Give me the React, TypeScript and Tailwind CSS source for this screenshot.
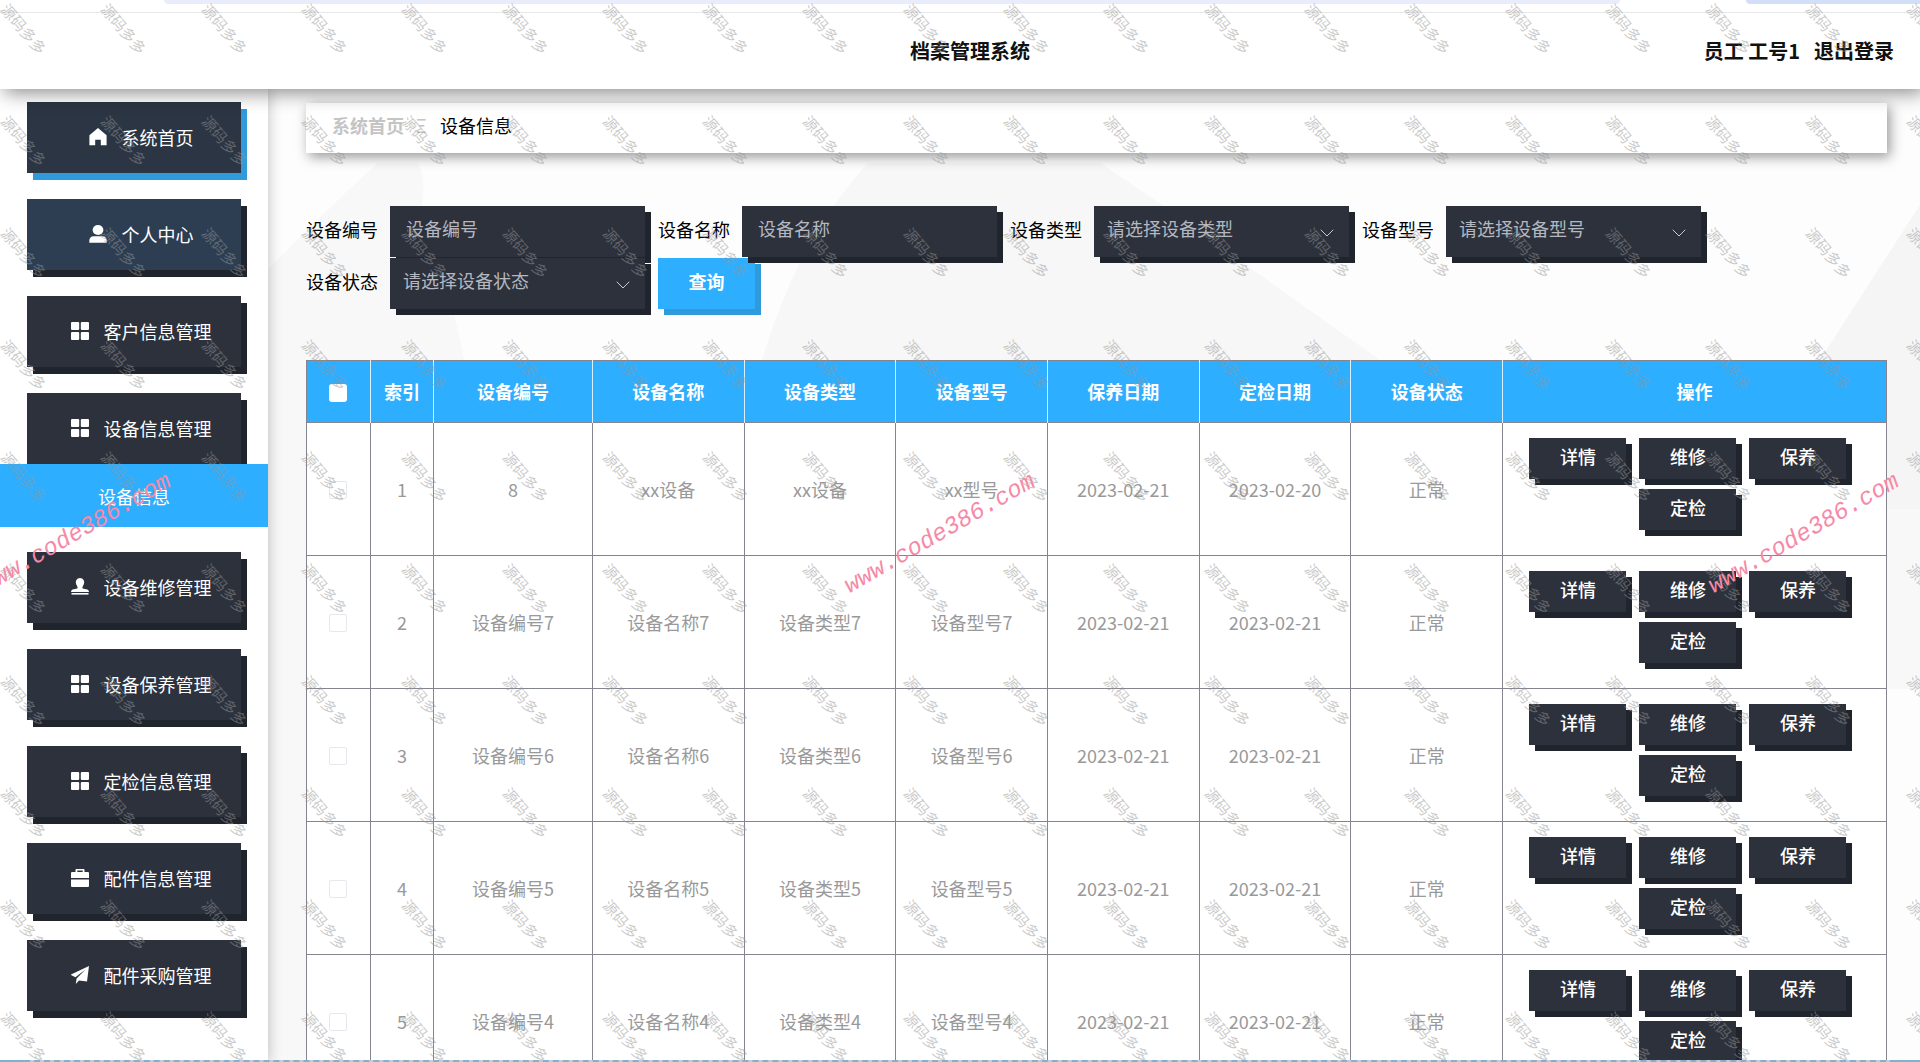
import { ChevronDown } from "lucide-react";

type IconName = "home" | "user" | "grid" | "stamp" | "case" | "plane";

const menu: { label: string; icon: IconName; tone: string; children?: string[] }[] = [
  { label: "系统首页", icon: "home", tone: "bg-[#2b3543] shadow-[6px_7px_0_#2f9bdb]" },
  { label: "个人中心", icon: "user", tone: "bg-[#2d3e53] shadow-[6px_7px_0_#20242c]" },
  { label: "客户信息管理", icon: "grid", tone: "bg-[#2c313c] shadow-[6px_7px_0_#20242c]" },
  { label: "设备信息管理", icon: "grid", tone: "bg-[#2c313c] shadow-[6px_7px_0_#20242c]", children: ["设备信息"] },
  { label: "设备维修管理", icon: "stamp", tone: "bg-[#2c313c] shadow-[6px_7px_0_#20242c]" },
  { label: "设备保养管理", icon: "grid", tone: "bg-[#2c333f] shadow-[6px_7px_0_#20242c]" },
  { label: "定检信息管理", icon: "grid", tone: "bg-[#2c313c] shadow-[6px_7px_0_#20242c]" },
  { label: "配件信息管理", icon: "case", tone: "bg-[#2c313e] shadow-[6px_7px_0_#20242c]" },
  { label: "配件采购管理", icon: "plane", tone: "bg-[#2c313c] shadow-[6px_7px_0_#20242c]" },
];

const columns = [
  { title: "设备编号", width: "w-[10.05%]" },
  { title: "设备名称", width: "w-[9.6%]" },
  { title: "设备类型", width: "w-[9.6%]" },
  { title: "设备型号", width: "w-[9.6%]" },
  { title: "保养日期", width: "w-[9.6%]" },
  { title: "定检日期", width: "w-[9.6%]" },
  { title: "设备状态", width: "w-[9.6%]" },
];

const rows = [
  ["8", "xx设备", "xx设备", "xx型号", "2023-02-21", "2023-02-20", "正常"],
  ["设备编号7", "设备名称7", "设备类型7", "设备型号7", "2023-02-21", "2023-02-21", "正常"],
  ["设备编号6", "设备名称6", "设备类型6", "设备型号6", "2023-02-21", "2023-02-21", "正常"],
  ["设备编号5", "设备名称5", "设备类型5", "设备型号5", "2023-02-21", "2023-02-21", "正常"],
  ["设备编号4", "设备名称4", "设备类型4", "设备型号4", "2023-02-21", "2023-02-21", "正常"],
];

const actions = ["详情", "维修", "保养", "定检"];

const fieldClass =
  "relative h-[51px] w-[255px] rounded-none bg-[#2c313c] pb-2 text-lg text-[#b4b8c0] shadow-[6px_6px_0_#20242c] outline-none placeholder:text-[#b4b8c0]";

const labelClass = "w-[72px] leading-[47px]";

function MenuIcon({ name }: { name: IconName }) {
  return (
    <svg viewBox="0 0 18 18" className="size-[18px] shrink-0 fill-white" aria-hidden="true">
      {name === "home" && <path d="M9 0 L0.4 7.2 V17.2 H6.2 V11.8 H11.8 V17.2 H17.6 V7.2 Z" />}
      {name === "user" && (
        <>
          <ellipse cx="9" cy="5" rx="5.4" ry="5" />
          <path d="M0.3 17.8 V15.8 Q0.3 11.4 5 11.2 H13 Q17.7 11.4 17.7 15.8 V17.8 Z" />
        </>
      )}
      {name === "grid" && (
        <>
          <rect x="0" y="0" width="8.2" height="8" rx="1" />
          <rect x="9.8" y="0" width="8.2" height="8" rx="1" />
          <rect x="0" y="10" width="8.2" height="8" rx="1" />
          <rect x="9.8" y="10" width="8.2" height="8" rx="1" />
        </>
      )}
      {name === "stamp" && (
        <>
          <path d="M9 0 A4.3 4.3 0 0 0 5.2 6.2 Q7 9 6.4 10.4 L1.6 11.6 Q0 12.2 0 14 H18 Q18 12.2 16.4 11.6 L11.6 10.4 Q11 9 12.8 6.2 A4.3 4.3 0 0 0 9 0 Z" />
          <rect x="0.5" y="15" width="17" height="1.6" />
        </>
      )}
      {name === "case" && (
        <path
          fillRule="evenodd"
          d="M4.5 3 V1 Q4.5 0 5.5 0 H12.5 Q13.5 0 13.5 1 V3 H17 Q18 3 18 4 V9 H0 V4 Q0 3 1 3 Z M6.3 1.6 V3 H11.7 V1.6 Z M0 10.6 H18 V17 Q18 18 17 18 H1 Q0 18 0 17 Z"
        />
      )}
      {name === "plane" && <path d="M18 0 L-0.6 8.8 L4.4 11.2 L14.5 3.6 L5.6 12.4 L4.8 18 L8 14.4 L16 15.6 Z" />}
    </svg>
  );
}

function SelectField({ id, placeholder }: { id: string; placeholder: string }) {
  return (
    <div className="relative">
      <select id={id} className={`${fieldClass} appearance-none pl-[13px]`}>
        <option>{placeholder}</option>
      </select>
      <ChevronDown className="pointer-events-none absolute right-[10px] top-[15px] size-6 text-[#c8ccd4]" strokeWidth={1} />
    </div>
  );
}

function Watermarks() {
  return (
    <div className="pointer-events-none absolute inset-0 z-30 select-none overflow-hidden" aria-hidden="true">
      <div className="grid w-[2006px] grid-cols-20 auto-rows-[112px]">
        {Array.from({ length: 200 }, (_, i) => (
          <div key={i} className="flex h-14 w-12 items-center justify-center">
            <span className="rotate-50 whitespace-nowrap text-[15px] leading-none text-[#969696]/50">源码多多</span>
          </div>
        ))}
      </div>
      <div className="absolute -left-8 top-[520px] flex gap-[648px]">
        {[0, 1, 2].map((n) => (
          <span
            key={n}
            className="w-[216px] shrink-0 -rotate-30 whitespace-nowrap font-['Liberation_Mono',monospace] text-2xl italic leading-7 text-[#f58aa8]"
          >
            www.code386.com
          </span>
        ))}
      </div>
    </div>
  );
}

export default function App() {
  return (
    <div className="relative flex h-screen flex-col overflow-hidden bg-white font-['Noto_Sans_CJK_SC','Noto_Sans',sans-serif] text-lg text-black">
      {/* browser tab strip */}
      <div className="relative z-30 flex h-3 shrink-0 justify-between bg-white">
        <div className="ml-[164px] h-1 w-[1456px] rounded-b-lg bg-[#e9edfb]" />
        <div className="h-1 w-[174px] rounded-bl-lg bg-[#d3dff9]" />
      </div>

      <header className="relative z-20 flex h-[77px] shrink-0 items-center border-t border-[#e8e8e8] bg-white pl-[46px] pr-[26px] text-xl font-bold text-[#111] shadow-[4px_4px_18px_rgba(0,0,0,0.45)]">
        <div className="flex-1" />
        <h1>档案管理系统</h1>
        <div className="flex flex-1 justify-end gap-[14px]">
          <span>员工 工号1</span>
          <a href="#logout">退出登录</a>
        </div>
      </header>

      <div className="flex min-h-0 flex-1">
        <nav className="relative z-10 w-[268px] shrink-0 bg-white pt-[13px] shadow-[2px_0_12px_rgba(0,0,0,0.2)]">
          <ul className="flex flex-col gap-[26px]">
            {menu.map((item) => (
              <li key={item.label} className={item.children ? "-mb-px" : ""}>
                <a
                  href={`#${item.label}`}
                  className={`mx-[27px] flex h-[71px] items-center justify-center gap-[15px] pb-0.5 pl-[14px] text-white ${item.tone}`}
                >
                  <MenuIcon name={item.icon} />
                  {item.label}
                </a>
                {item.children?.map((child) => (
                  <a key={child} href={`#${child}`} className="relative flex h-[63px] items-center justify-center bg-[#2eaeff] text-white">
                    {child}
                  </a>
                ))}
              </li>
            ))}
          </ul>
        </nav>

        <main className="relative min-w-0 flex-1 overflow-hidden bg-[#fdfdfd] pl-[38px] pr-[33px] pt-[14px]">
          <svg className="absolute inset-0 h-full w-full" viewBox="0 0 1652 973" preserveAspectRatio="none" aria-hidden="true">
            <path d="M0 180 Q70 110 110 74 H150 Q158 90 154 115 Q180 190 196 270 L180 973 H0 Z" fill="#f8f8f8" />
            <path d="M494 271 Q530 150 600 74 H832 L887 111 L1012 200 L1112 271 Z" fill="#f7f7f7" />
            <path d="M1552 271 L1652 116 V420 H1552 Z" fill="#f5f5f5" />
            <path d="M1600 420 H1652 V600 H1600 Z" fill="#f8f8f8" />
          </svg>

          <nav className="relative flex h-[50px] items-center gap-3 bg-white px-[26px] pb-1.5 shadow-[3px_4px_12px_rgba(0,0,0,0.4)]">
            <a href="#home" className="font-bold text-[#c4c4c4]">
              系统首页
            </a>
            <span className="w-3 overflow-hidden text-[#c4c4c4]">Ξ</span>
            <span>设备信息</span>
          </nav>

          <form className="relative mt-[53px] flex flex-wrap gap-x-[13px] gap-y-px">
            <div className="flex gap-3">
              <label htmlFor="code" className={labelClass}>设备编号</label>
              <input id="code" placeholder="设备编号" className={`${fieldClass} px-4`} />
            </div>
            <div className="flex gap-3">
              <label htmlFor="name" className={labelClass}>设备名称</label>
              <input id="name" placeholder="设备名称" className={`${fieldClass} px-4`} />
            </div>
            <div className="flex gap-3">
              <label htmlFor="type" className={labelClass}>设备类型</label>
              <SelectField id="type" placeholder="请选择设备类型" />
            </div>
            <div className="flex gap-3">
              <label htmlFor="model" className={labelClass}>设备型号</label>
              <SelectField id="model" placeholder="请选择设备型号" />
            </div>
            <div className="flex gap-3">
              <label htmlFor="status" className={labelClass}>设备状态</label>
              <SelectField id="status" placeholder="请选择设备状态" />
            </div>
            <button type="button" className="h-[51px] w-[97px] bg-[#2eaeff] pb-1.5 font-bold text-white shadow-[6px_6px_0_#2f9bdb]">
              查询
            </button>
          </form>

          <table className="relative mt-[51px] w-full table-fixed border-collapse border border-[#85858f] bg-white text-center">
            <thead>
              <tr className="h-[62px] bg-[#2eaeff] text-white">
                <th className="w-[4.05%] border-r border-[#d8f0ff]">
                  <input type="checkbox" aria-label="全选" className="mx-auto mt-0.5 block size-[18px] appearance-none rounded-[3px] bg-white" />
                </th>
                <th className="w-[4%] border-r border-[#d8f0ff] pb-0.5 font-bold">索引</th>
                {columns.map((col) => (
                  <th key={col.title} className={`${col.width} border-r border-[#d8f0ff] pb-0.5 font-bold`}>
                    {col.title}
                  </th>
                ))}
                <th className="pb-0.5 font-bold">操作</th>
              </tr>
            </thead>
            <tbody>
              {rows.map((row, index) => (
                <tr key={row[0]} className="h-[133px] text-[#999]">
                  <td className="border border-[#85858f]">
                    <input
                      type="checkbox"
                      aria-label={`选择第${index + 1}行`}
                      className="mx-auto mt-0.5 block size-[18px] appearance-none rounded-[2px] border border-[#e6e8ee] bg-white"
                    />
                  </td>
                  <td className="border border-[#85858f]">{index + 1}</td>
                  {row.map((value, i) => (
                    <td key={columns[i].title} className="border border-[#85858f]">
                      {value}
                    </td>
                  ))}
                  <td className="border border-[#85858f] pt-[14px] pb-[15px]">
                    <div className="mx-auto flex w-[330px] flex-wrap justify-center">
                      {actions.map((action) => (
                        <button
                          key={action}
                          type="button"
                          className="mr-[13px] mb-[10px] h-[41px] w-[97px] bg-[#2c313c] pb-1 font-medium text-white shadow-[6px_6px_0_#20242c]"
                        >
                          {action}
                        </button>
                      ))}
                    </div>
                  </td>
                </tr>
              ))}
            </tbody>
          </table>
        </main>
      </div>

      <Watermarks />
      {/* progress line along the bottom edge */}
      <div className="absolute inset-x-0 bottom-0 z-40 flex bg-[#c3ccd0]">
        <div className="h-0.5 w-6 bg-[#7db4cc]" />
        <div className="flex-1 border-b-2 border-dashed border-[#7db4cc]" />
        <div className="h-0.5 w-6 bg-[#7db4cc]" />
      </div>
    </div>
  );
}
